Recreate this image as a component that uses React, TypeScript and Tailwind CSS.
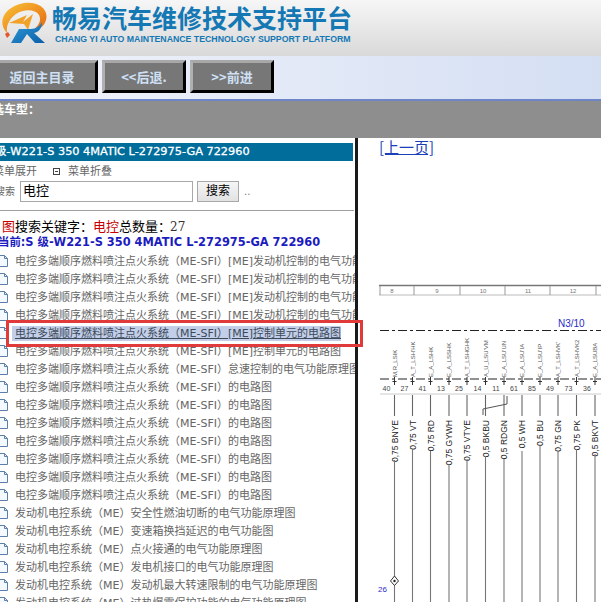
const ff = "font-['DejaVu_Sans','Noto_Sans_CJK_SC',sans-serif]";

const ME = "电控多端顺序燃料喷注点火系统（ME-SFI）";
const EN = "发动机电控系统（ME）";
const rows: { t: string; hl?: boolean }[] = [
  { t: ME + "[ME]发动机控制的电气功能原理图" },
  { t: ME + "[ME]发动机控制的电气功能原理图" },
  { t: ME + "[ME]发动机控制的电气功能原理图" },
  { t: ME + "[ME]发动机控制的电气功能原理图" },
  { t: ME + "[ME]控制单元的电路图", hl: true },
  { t: ME + "[ME]控制单元的电路图" },
  { t: ME + "怠速控制的电气功能原理图" },
  { t: ME + "的电路图" },
  { t: ME + "的电路图" },
  { t: ME + "的电路图" },
  { t: ME + "的电路图" },
  { t: ME + "的电路图" },
  { t: ME + "的电路图" },
  { t: ME + "的电路图" },
  { t: EN + "安全性燃油切断的电气功能原理图" },
  { t: EN + "变速箱换挡延迟的电气功能图" },
  { t: EN + "点火接通的电气功能原理图" },
  { t: EN + "发电机接口的电气功能原理图" },
  { t: EN + "发动机最大转速限制的电气功能原理图" },
  { t: EN + "过热爆震保护功能的电气功能原理图" },
];

function DocIcon() {
  return (
    <svg width="9" height="14" viewBox="0 0 9 14" className="shrink-0">
      <path d="M-3 1.5H4.5L7.5 4.5V12.5H-3Z" fill="#f4f8ff" stroke="#5b7fa8" strokeWidth="1" />
      <path d="M4.5 1.5V4.5H7.5" fill="none" stroke="#5b7fa8" strokeWidth="1" />
    </svg>
  );
}

function Logo() {
  return (
    <svg width="48" height="44" viewBox="0 0 48 44" className="shrink-0">
      <defs>
        <linearGradient id="ring" x1="0" y1="0" x2="1" y2="1">
          <stop offset="0" stopColor="#f7c53a" />
          <stop offset="0.6" stopColor="#ef8a1d" />
          <stop offset="1" stopColor="#d8631a" />
        </linearGradient>
        <linearGradient id="rr" x1="0" y1="0" x2="1" y2="1">
          <stop offset="0" stopColor="#2f9ad8" />
          <stop offset="1" stopColor="#0b5ea8" />
        </linearGradient>
      </defs>
      <path d="M7 31C-3 21 3 5 24 1C38 -1 49 7 46 18C44 25 38 29 31 30C38 25 42 19 39 13C35 7 24 7 16 12C9 17 6 24 7 31Z" fill="url(#ring)" />
      <path d="M9 21L27 13L23 20L33 12L28 28L24 22Z" fill="#f2a228" />
      <path d="M11 41L19 27H31C36 27 40 24 42 20C42 26 39 30 34 31L45 41H35L27 32L21 41Z" fill="url(#rr)" />
      <path d="M8 30L10 33L7 36L5 32Z" fill="#e4572a" />
    </svg>
  );
}

function NavBtn({ w, children, className = "" }: { w: string; children: React.ReactNode; className?: string }) {
  return (
    <div
      className={`${w} ${className} h-[33px] shrink-0 bg-[#777777] border-[3px] border-l-[#b0b0b0] border-t-[#a8a8a8] border-r-black border-b-black flex items-center justify-center text-[#cfe0f5] text-[13px] font-bold font-['Noto_Sans_CJK_SC','DejaVu_Serif',serif]`}
    >
      {children}
    </div>
  );
}

const wires = [
  { x: 394.5, n: "40", top: "M,R_LSIK", sig: "0,75 BNYE", end: 458 },
  { x: 412.5, n: "27", top: "A_T_LSH'HK", sig: "0,75 VT", end: 447 },
  { x: 430.5, n: "41", top: "E_A_LSHK", sig: "0,75 RD", end: 449 },
  { x: 449, n: "13", top: "E_A_LSSHK", sig: "0,75 GYWH", end: 462 },
  { x: 467, n: "25", top: "A_T_LSHGHK", sig: "0,75 VTYE", end: 457 },
  { x: 485.5, n: "14", top: "A_U_LSU'VM", sig: "0,5 BKBU", end: 454 },
  { x: 504, n: "11", top: "E_A_LSU'UN", sig: "0,5 RDGN", end: 457 },
  { x: 522, n: "61", top: "E_A_LSU'IA", sig: "0,5 WH", end: 449 },
  { x: 540, n: "85", top: "E_A_LSU'IP", sig: "0,5 BU", end: 444 },
  { x: 558, n: "49", top: "A_T_LSHVK'", sig: "0,75 GN", end: 449 },
  { x: 576.5, n: "73", top: "A_T_LSHVK2", sig: "0,75 PK", end: 447 },
  { x: 595, n: "36", top: "E_A_LSUBA", sig: "0,5 BKVT", end: 452 },
];
const OX = 358;

function Diagram() {
  const ticks = [380, 414, 460, 505, 550, 596];
  const labels = [
    { x: 392, t: "8" },
    { x: 437, t: "9" },
    { x: 483, t: "10" },
    { x: 528, t: "11" },
    { x: 573, t: "12" },
  ];
  return (
    <svg width="243" height="320" viewBox={`${OX} 282 243 320`} className="block font-['Liberation_Sans',sans-serif]">
      <line x1="379" y1="285.5" x2="601" y2="285.5" stroke="#777" strokeWidth="1.5" />
      <line x1="379" y1="295" x2="601" y2="295" stroke="#bbb" />
      {ticks.map((x) => (
        <line key={x} x1={x} y1="286" x2={x} y2="295" stroke="#999" />
      ))}
      {labels.map((l) => (
        <text key={l.x} x={l.x} y="293" fontSize="6" fill="#777" textAnchor="middle">{l.t}</text>
      ))}
      <text x="558" y="327" fontSize="10" fill="#2a2ac8">N3/10</text>
      <line x1="380" y1="330.5" x2="601" y2="330.5" stroke="#222" strokeDasharray="9 3 3 3" />
      <line x1="380" y1="379" x2="601" y2="379" stroke="#222" strokeDasharray="9 3 3 3" />
      <line x1="380" y1="394" x2="601" y2="394" stroke="#ccc" />
      {wires.map((w) => (
        <g key={w.x}>
          <text transform={`translate(${w.x + 2} 377) rotate(-90)`} fontSize="6" fill="#555">{w.top}</text>
          <path d={`M${w.x - 2} 381.5H${w.x + 2}M${w.x} 377V385`} stroke="#333" fill="none" strokeWidth="1" />
          <text x={w.x - 8} y="391" fontSize="7" fill="#444" textAnchor="middle">{w.n}</text>
          <line x1={w.x} y1="395" x2={w.x} y2="416" stroke="#666" strokeWidth="1.1" />
          <text transform={`translate(${w.x + 3} 420) rotate(-90)`} fontSize="8.5" fill="#222" textAnchor="end">{w.sig}</text>
          <line x1={w.x} y1={w.end + 2} x2={w.x} y2="602" stroke="#777" strokeWidth="1.1" />
        </g>
      ))}
      <path d="M483 415V409L507 404V396" stroke="#555" fill="none" />
      <path d="M394.5 576L398.5 581L394.5 585.5L390.5 581Z" fill="#fff" stroke="#333" />
      <circle cx="394.5" cy="581" r="1.2" fill="#222" />
      <text x="378" y="592" fontSize="8" fill="#2a2ac8">26</text>
    </svg>
  );
}

export default function App() {
  return (
    <div className={`w-[601px] h-[602px] overflow-hidden bg-white flex flex-col ${ff}`}>
      {/* header */}
      <div className="h-[56px] shrink-0 bg-gradient-to-b from-[#f6f6f6] to-[#d9d9d9] flex items-start pt-[2px] overflow-hidden">
        <Logo />
        <div className="flex flex-col ml-[4px] pt-[2px] text-[#1478b4] font-['Noto_Sans_CJK_SC',sans-serif]">
          <div className="text-[25px] leading-[26px] font-bold whitespace-nowrap">畅易汽车维修技术支持平台</div>
          <div className="text-[8.75px] leading-[12px] mt-[3px] ml-[3px] font-bold whitespace-nowrap font-['Liberation_Sans',sans-serif]">CHANG YI AUTO MAINTENANCE TECHNOLOGY SUPPORT PLATFORM</div>
        </div>
      </div>
      {/* nav */}
      <div className="h-[45px] shrink-0 bg-gradient-to-r from-[#f1f3fa] to-[#d4dff3] flex items-start pt-[4px] border-b-[2px] border-b-[#6e86c8]">
        <NavBtn w="w-[112px]" className="-ml-[14px]">返回主目录</NavBtn>
        <NavBtn w="w-[84px]" className="ml-[4px]">&lt;&lt;后退.</NavBtn>
        <NavBtn w="w-[84px]" className="ml-[4px]">&gt;&gt;前进</NavBtn>
      </div>
      {/* vehicle bar */}
      <div className="h-[37px] shrink-0 bg-[#8e8e8e] overflow-hidden">
        <div className="-ml-[8px] pt-[1px] text-[12px] leading-[16px] font-bold text-white whitespace-nowrap">选车型：</div>
      </div>
      {/* body */}
      <div className="flex flex-1 min-h-0 relative">
        <div className="w-[358px] shrink-0 border-r-[3px] border-r-[#1a1a1a] overflow-hidden flex flex-col">
          <div className="h-[5px] shrink-0" />
          <div className="w-[353px] h-[18px] shrink-0 bg-[#006d9b] overflow-hidden">
            <div className="-ml-[5px] text-[11.3px] leading-[18px] text-white whitespace-nowrap [-webkit-text-stroke:0.3px_white]">级-W221-S 350 4MATIC L-272975-GA 722960</div>
          </div>
          <div className="h-[20px] shrink-0 flex items-start pt-[4px] text-[11px] leading-[14px] text-[#666] whitespace-nowrap">
            <span className="-ml-[7px]">菜单展开</span>
            <span className="ml-[16px] w-[7px] h-[7px] border border-[#444] shrink-0 mt-[3px]">
              <span className="block h-[1px] mt-[2px] mx-[1px] bg-[#444]" />
            </span>
            <span className="ml-[8px]">菜单折叠</span>
          </div>
          <div className="h-[21px] shrink-0 flex items-center whitespace-nowrap">
            <span className="text-[10px] text-[#666] -ml-[5px]">搜索</span>
            <div className="ml-[5px] w-[173px] h-[21px] border border-[#a8a8a8] bg-white text-[13px] leading-[18px] pl-[2px] text-black">电控</div>
            <div className="ml-[4px] w-[42px] h-[21px] border border-[#a8a8a8] bg-gradient-to-b from-[#f6f6f6] to-[#e2e2e2] text-[12px] leading-[18px] text-center text-black">搜索</div>
            <span className="ml-[5px] text-[10px] text-[#777]">..</span>
          </div>
          <div className="h-[9px] shrink-0 border-b border-b-[#a0a0a0] w-[354px]" />
          <div className="h-[6px] shrink-0" />
          <div className="h-[18px] shrink-0 text-[13px] leading-[18px] whitespace-nowrap text-black font-['Noto_Sans_CJK_SC','DejaVu_Serif',serif]">
            <span className="text-[#c80000] ml-[2px]">图</span>搜索关键字：<span className="text-[#c80000]">电控</span>总数量：<span className="text-[#333] ml-[-1px] font-['DejaVu_Serif',serif] text-[12px]">27</span>
          </div>
          <div className="h-[17px] shrink-0 overflow-hidden text-[11.4px] leading-[15px] font-bold text-[#1c1cc0] whitespace-nowrap">
            <span className="-ml-[2px]">当前:S 级-W221-S 350 4MATIC L-272975-GA 722960</span>
          </div>
          <div className="flex flex-col w-[355px]">
            {rows.map((r, i) => (
              <div key={i} className="h-[18px] shrink-0 flex items-center whitespace-nowrap overflow-hidden">
                <DocIcon />
                {r.hl ? (
                  <span className="ml-[3px] pl-[3px] text-[#3c4a5c] bg-[#c3cfe8] underline text-[11px] leading-[15px]">{r.t}</span>
                ) : (
                  <span className="ml-[6px] text-[#666] text-[11px] leading-[15px]">{r.t}</span>
                )}
              </div>
            ))}
          </div>
        </div>
        <div className="flex-1 min-w-0 overflow-hidden bg-white relative">
          <div className="absolute left-[21px] top-[1px] text-[15px] leading-[16px] text-[#1a3fb8] underline whitespace-nowrap font-['Noto_Sans_CJK_SC',sans-serif]">[上一页]</div>
          <div className="h-[144px]" />
          <Diagram />
        </div>
        {/* annotation frame over the list and the divider */}
        <div className="absolute left-[6px] top-[182px] w-[357px] h-[27px] border-[3px] border-[#e03a3a] z-10" />
      </div>
    </div>
  );
}
